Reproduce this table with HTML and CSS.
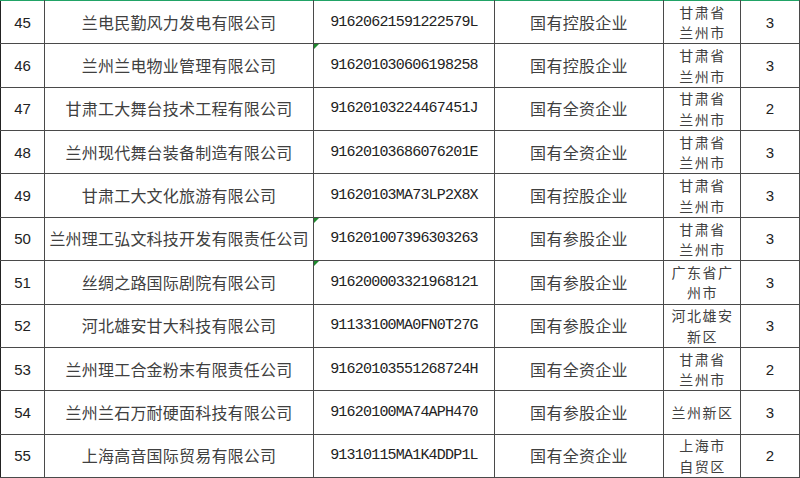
FILE: index.html
```html
<!DOCTYPE html>
<html lang="zh-CN">
<head>
<meta charset="utf-8">
<title>企业名单</title>
<link rel="stylesheet" href="styles.css">
</head>
<body>
<table class="sheet">
  <colgroup>
    <col class="c-no"><col class="c-name"><col class="c-code"><col class="c-type"><col class="c-region"><col class="c-num">
  </colgroup>
  <tbody>
    <tr><td class="no">45</td><td class="name">兰电民勤风力发电有限公司</td><td class="code">91620621591222579L</td><td class="type">国有控股企业</td><td class="region">甘肃省<br>兰州市</td><td class="num">3</td></tr>
    <tr><td class="no">46</td><td class="name">兰州兰电物业管理有限公司</td><td class="code"><span class="flag"></span>916201030606198258</td><td class="type">国有控股企业</td><td class="region">甘肃省<br>兰州市</td><td class="num">3</td></tr>
    <tr><td class="no">47</td><td class="name">甘肃工大舞台技术工程有限公司</td><td class="code">91620103224467451J</td><td class="type">国有全资企业</td><td class="region">甘肃省<br>兰州市</td><td class="num">2</td></tr>
    <tr><td class="no">48</td><td class="name">兰州现代舞台装备制造有限公司</td><td class="code">91620103686076201E</td><td class="type">国有全资企业</td><td class="region">甘肃省<br>兰州市</td><td class="num">3</td></tr>
    <tr><td class="no">49</td><td class="name">甘肃工大文化旅游有限公司</td><td class="code">91620103MA73LP2X8X</td><td class="type">国有控股企业</td><td class="region">甘肃省<br>兰州市</td><td class="num">3</td></tr>
    <tr><td class="no">50</td><td class="name">兰州理工弘文科技开发有限责任公司</td><td class="code"><span class="flag"></span>916201007396303263</td><td class="type">国有参股企业</td><td class="region">甘肃省<br>兰州市</td><td class="num">3</td></tr>
    <tr><td class="no">51</td><td class="name">丝绸之路国际剧院有限公司</td><td class="code"><span class="flag"></span>916200003321968121</td><td class="type">国有参股企业</td><td class="region">广东省广<br>州市</td><td class="num">3</td></tr>
    <tr><td class="no">52</td><td class="name">河北雄安甘大科技有限公司</td><td class="code">91133100MA0FN0T27G</td><td class="type">国有参股企业</td><td class="region">河北雄安<br>新区</td><td class="num">3</td></tr>
    <tr><td class="no">53</td><td class="name">兰州理工合金粉末有限责任公司</td><td class="code">91620103551268724H</td><td class="type">国有全资企业</td><td class="region">甘肃省<br>兰州市</td><td class="num">2</td></tr>
    <tr><td class="no">54</td><td class="name">兰州兰石万耐硬面科技有限公司</td><td class="code">91620100MA74APH470</td><td class="type">国有参股企业</td><td class="region">兰州新区</td><td class="num">3</td></tr>
    <tr><td class="no">55</td><td class="name">上海高音国际贸易有限公司</td><td class="code">91310115MA1K4DDP1L</td><td class="type">国有全资企业</td><td class="region">上海市<br>自贸区</td><td class="num">2</td></tr>
  </tbody>
</table>
</body>
</html>
```

FILE: styles.css
```css
html, body {
  margin: 0;
  padding: 0;
  background: #ffffff;
}

.sheet {
  border-collapse: collapse;
  table-layout: fixed;
  width: 799px;
  border-top: 1px solid #21a366;
  font-family: "Noto Sans CJK SC", sans-serif;
  color: #404040;
}

.c-no { width: 44px; }
.c-name { width: 269px; }
.c-code { width: 181px; }
.c-type { width: 169px; }
.c-region { width: 77px; }
.c-num { width: 59px; }

.sheet tr {
  height: 43.36px;
}

.sheet td {
  border: 1px solid #4a4a4a;
  padding: 0 2px;
  text-align: center;
  vertical-align: middle;
  font-size: 16px;
  line-height: 19px;
  white-space: nowrap;
  position: relative;
}

.sheet tr:first-child td {
  border-top: 1px solid #21a366;
}

.sheet td.no {
  font-family: "Liberation Sans", Arial, sans-serif;
  font-size: 15px;
  color: #222;
  border-left: 1px solid #222;
}

.sheet td.name {
  letter-spacing: 0.2px;
}

.sheet td.code {
  font-family: "Liberation Mono", "Courier New", monospace;
  font-size: 15px;
  letter-spacing: -0.8px;
  color: #222;
}

.sheet td.type {
  letter-spacing: 0.3px;
}

.sheet td.region {
  font-size: 14px;
  line-height: 20.4px;
  letter-spacing: 1.5px;
  padding: 0 0 0 1px;
}

.sheet td.num {
  font-family: "Liberation Sans", Arial, sans-serif;
  font-size: 15px;
  color: #222;
}

.flag {
  position: absolute;
  left: 0;
  top: 0;
  width: 0;
  height: 0;
  border-top: 5px solid #1f8a2e;
  border-right: 5px solid transparent;
}
```
